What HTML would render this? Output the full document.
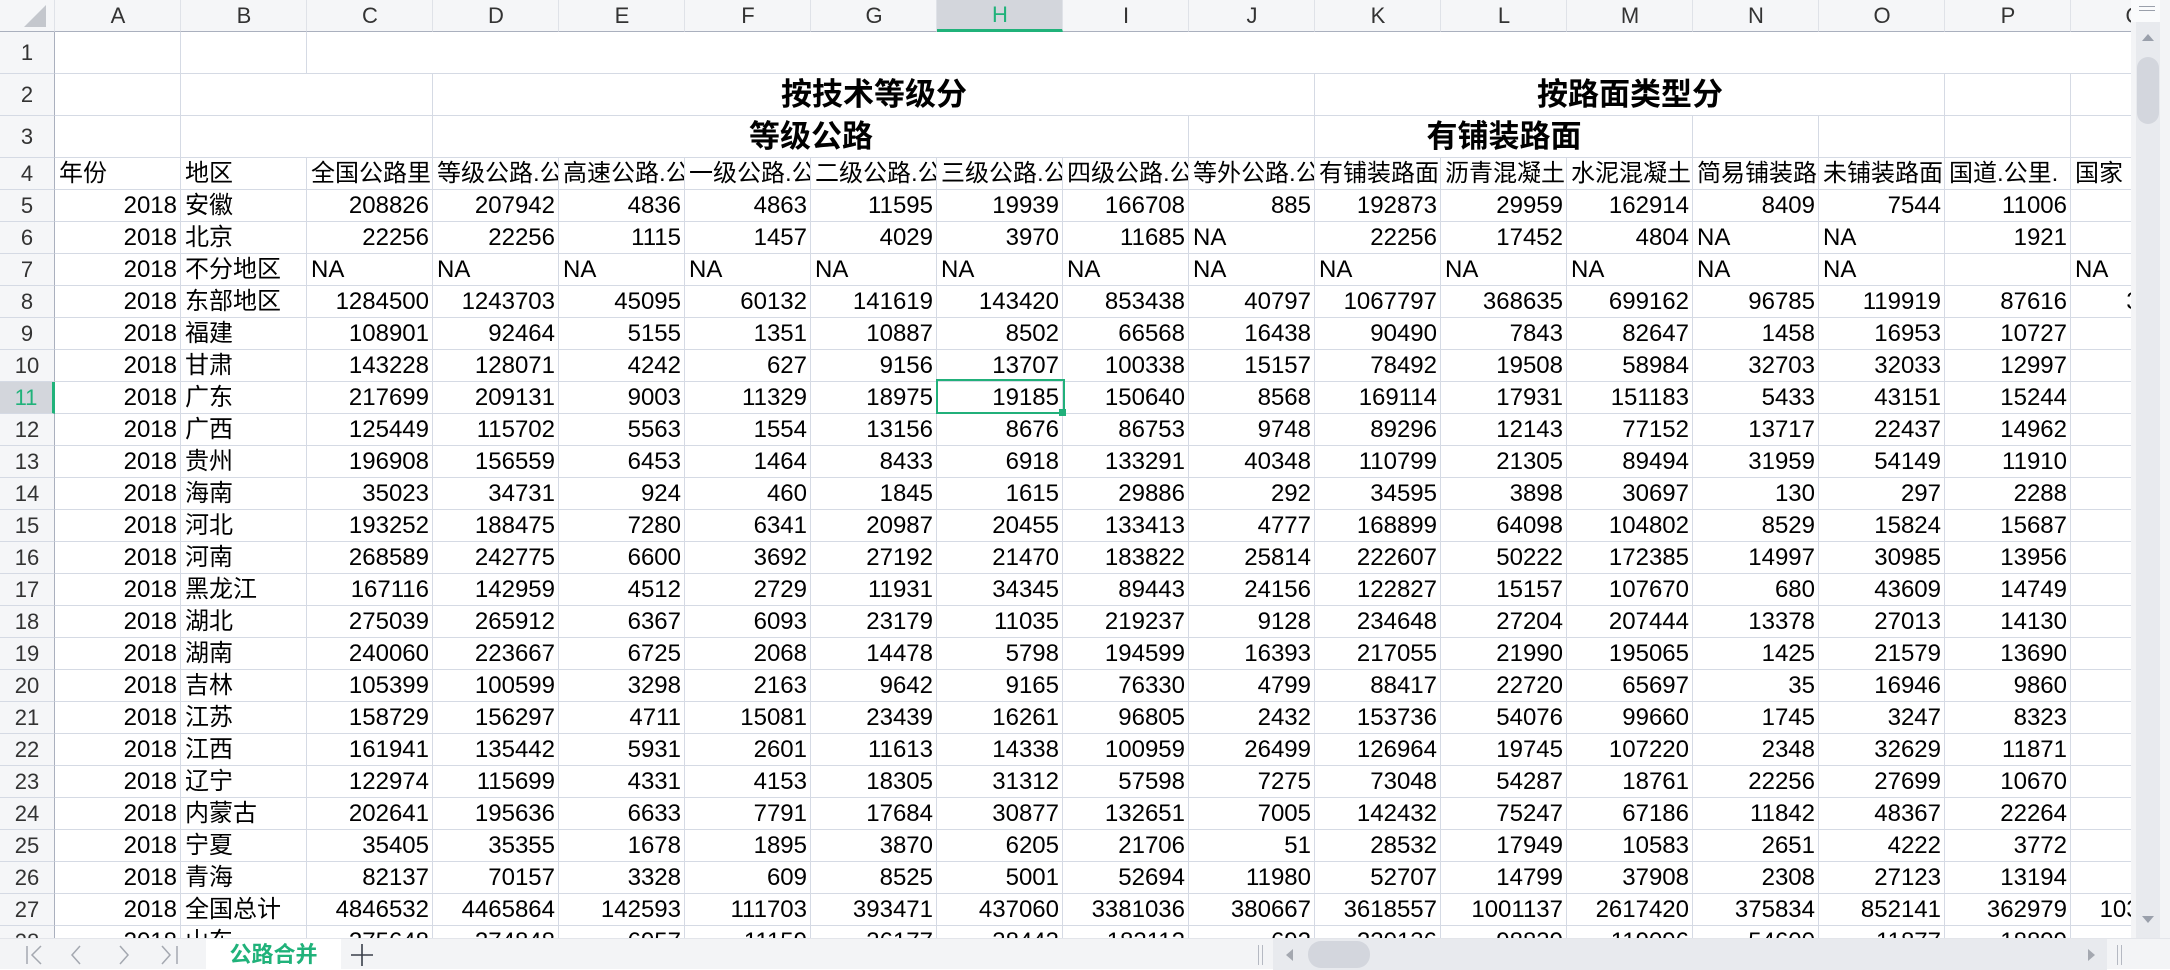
<!DOCTYPE html>
<html><head><meta charset="utf-8">
<style>
*{margin:0;padding:0;box-sizing:border-box}
body{width:2170px;height:969px;overflow:hidden;background:#fff;font-family:"Liberation Sans","Noto Sans CJK SC",sans-serif;position:relative}
#grid{position:absolute;left:0;top:0;width:2131px;height:938px;overflow:hidden}
table{border-collapse:separate;border-spacing:0;table-layout:fixed;width:2197px}
td{border-right:1px solid #d5dae4;border-bottom:1px solid #d5dae4;white-space:nowrap;overflow:hidden;font-size:24px;color:#000;padding:0 3px 0 4px;line-height:31px;height:32px;vertical-align:middle}
td.n{text-align:right}
tr.h td{height:30px;line-height:29px;background:#f5f6f8;text-align:center;color:#333;font-size:22px;border-bottom:1px solid #aab0be;border-right:1px solid #dfe2e8}
td.rh{background:#f5f6f8;text-align:center;color:#333;font-size:22px;border-right:1px solid #aab0be;padding:0}
tr.t td{height:42px;line-height:41px}
td.b{font-weight:bold;font-size:31px;text-align:center}
td.sel{background:#d3d6dc!important;color:#20b27a!important}
#selbox{position:absolute;left:936px;top:379px;width:129px;height:35px;border:2px solid #21b07a}
#selh{position:absolute;left:1059px;top:409px;width:7px;height:7px;background:#21b07a}
#bar{position:absolute;left:0;top:938px;width:2170px;height:31px;background:#f3f4f6;border-top:1px solid #e3e5ea}
#vs{position:absolute;left:2131px;top:0;width:39px;height:938px;background:#f3f4f6}
</style></head><body>
<div id="grid">
<table>
<colgroup><col style="width:55px"><col style="width:126px"><col style="width:126px"><col style="width:126px"><col style="width:126px"><col style="width:126px"><col style="width:126px"><col style="width:126px"><col style="width:126px"><col style="width:126px"><col style="width:126px"><col style="width:126px"><col style="width:126px"><col style="width:126px"><col style="width:126px"><col style="width:126px"><col style="width:126px"><col style="width:126px"></colgroup>
<tr class="h"><td style="position:relative"><svg width="24" height="24" style="position:absolute;left:22px;top:3px" viewBox="0 0 24 24"><polygon points="24,2 24,24 2,24" fill="#c4c7cd"/></svg></td><td>A</td><td>B</td><td>C</td><td>D</td><td>E</td><td>F</td><td>G</td><td class="sel" style="border-bottom:3px solid #20b27a">H</td><td>I</td><td>J</td><td>K</td><td>L</td><td>M</td><td>N</td><td>O</td><td>P</td><td>Q</td></tr>
<tr class="t"><td class="rh">1</td><td></td><td></td><td colspan="15"></td></tr>
<tr class="t"><td class="rh">2</td><td></td><td colspan="2"></td><td colspan="7" class="b">按技术等级分</td><td colspan="5" class="b">按路面类型分</td><td></td><td></td></tr>
<tr class="t"><td class="rh">3</td><td></td><td colspan="2"></td><td colspan="6" class="b">等级公路</td><td></td><td colspan="3" class="b">有铺装路面</td><td></td><td></td><td></td><td></td></tr>
<tr><td class="rh">4</td><td>年份</td><td>地区</td><td>全国公路里</td><td>等级公路.公</td><td>高速公路.公</td><td>一级公路.公</td><td>二级公路.公</td><td>三级公路.公</td><td>四级公路.公</td><td>等外公路.公</td><td>有铺装路面</td><td>沥青混凝土</td><td>水泥混凝土</td><td>简易铺装路</td><td>未铺装路面</td><td>国道.公里.</td><td>国家</td></tr>
<tr><td class="rh">5</td><td class="n">2018</td><td>安徽</td><td class="n">208826</td><td class="n">207942</td><td class="n">4836</td><td class="n">4863</td><td class="n">11595</td><td class="n">19939</td><td class="n">166708</td><td class="n">885</td><td class="n">192873</td><td class="n">29959</td><td class="n">162914</td><td class="n">8409</td><td class="n">7544</td><td class="n">11006</td><td></td></tr>
<tr><td class="rh">6</td><td class="n">2018</td><td>北京</td><td class="n">22256</td><td class="n">22256</td><td class="n">1115</td><td class="n">1457</td><td class="n">4029</td><td class="n">3970</td><td class="n">11685</td><td>NA</td><td class="n">22256</td><td class="n">17452</td><td class="n">4804</td><td>NA</td><td>NA</td><td class="n">1921</td><td></td></tr>
<tr><td class="rh">7</td><td class="n">2018</td><td>不分地区</td><td>NA</td><td>NA</td><td>NA</td><td>NA</td><td>NA</td><td>NA</td><td>NA</td><td>NA</td><td>NA</td><td>NA</td><td>NA</td><td>NA</td><td>NA</td><td></td><td>NA</td></tr>
<tr><td class="rh">8</td><td class="n">2018</td><td>东部地区</td><td class="n">1284500</td><td class="n">1243703</td><td class="n">45095</td><td class="n">60132</td><td class="n">141619</td><td class="n">143420</td><td class="n">853438</td><td class="n">40797</td><td class="n">1067797</td><td class="n">368635</td><td class="n">699162</td><td class="n">96785</td><td class="n">119919</td><td class="n">87616</td><td class="n">35321</td></tr>
<tr><td class="rh">9</td><td class="n">2018</td><td>福建</td><td class="n">108901</td><td class="n">92464</td><td class="n">5155</td><td class="n">1351</td><td class="n">10887</td><td class="n">8502</td><td class="n">66568</td><td class="n">16438</td><td class="n">90490</td><td class="n">7843</td><td class="n">82647</td><td class="n">1458</td><td class="n">16953</td><td class="n">10727</td><td></td></tr>
<tr><td class="rh">10</td><td class="n">2018</td><td>甘肃</td><td class="n">143228</td><td class="n">128071</td><td class="n">4242</td><td class="n">627</td><td class="n">9156</td><td class="n">13707</td><td class="n">100338</td><td class="n">15157</td><td class="n">78492</td><td class="n">19508</td><td class="n">58984</td><td class="n">32703</td><td class="n">32033</td><td class="n">12997</td><td></td></tr>
<tr><td class="rh sel" style="border-right:3px solid #20b27a">11</td><td class="n">2018</td><td>广东</td><td class="n">217699</td><td class="n">209131</td><td class="n">9003</td><td class="n">11329</td><td class="n">18975</td><td class="n">19185</td><td class="n">150640</td><td class="n">8568</td><td class="n">169114</td><td class="n">17931</td><td class="n">151183</td><td class="n">5433</td><td class="n">43151</td><td class="n">15244</td><td></td></tr>
<tr><td class="rh">12</td><td class="n">2018</td><td>广西</td><td class="n">125449</td><td class="n">115702</td><td class="n">5563</td><td class="n">1554</td><td class="n">13156</td><td class="n">8676</td><td class="n">86753</td><td class="n">9748</td><td class="n">89296</td><td class="n">12143</td><td class="n">77152</td><td class="n">13717</td><td class="n">22437</td><td class="n">14962</td><td></td></tr>
<tr><td class="rh">13</td><td class="n">2018</td><td>贵州</td><td class="n">196908</td><td class="n">156559</td><td class="n">6453</td><td class="n">1464</td><td class="n">8433</td><td class="n">6918</td><td class="n">133291</td><td class="n">40348</td><td class="n">110799</td><td class="n">21305</td><td class="n">89494</td><td class="n">31959</td><td class="n">54149</td><td class="n">11910</td><td></td></tr>
<tr><td class="rh">14</td><td class="n">2018</td><td>海南</td><td class="n">35023</td><td class="n">34731</td><td class="n">924</td><td class="n">460</td><td class="n">1845</td><td class="n">1615</td><td class="n">29886</td><td class="n">292</td><td class="n">34595</td><td class="n">3898</td><td class="n">30697</td><td class="n">130</td><td class="n">297</td><td class="n">2288</td><td></td></tr>
<tr><td class="rh">15</td><td class="n">2018</td><td>河北</td><td class="n">193252</td><td class="n">188475</td><td class="n">7280</td><td class="n">6341</td><td class="n">20987</td><td class="n">20455</td><td class="n">133413</td><td class="n">4777</td><td class="n">168899</td><td class="n">64098</td><td class="n">104802</td><td class="n">8529</td><td class="n">15824</td><td class="n">15687</td><td></td></tr>
<tr><td class="rh">16</td><td class="n">2018</td><td>河南</td><td class="n">268589</td><td class="n">242775</td><td class="n">6600</td><td class="n">3692</td><td class="n">27192</td><td class="n">21470</td><td class="n">183822</td><td class="n">25814</td><td class="n">222607</td><td class="n">50222</td><td class="n">172385</td><td class="n">14997</td><td class="n">30985</td><td class="n">13956</td><td></td></tr>
<tr><td class="rh">17</td><td class="n">2018</td><td>黑龙江</td><td class="n">167116</td><td class="n">142959</td><td class="n">4512</td><td class="n">2729</td><td class="n">11931</td><td class="n">34345</td><td class="n">89443</td><td class="n">24156</td><td class="n">122827</td><td class="n">15157</td><td class="n">107670</td><td class="n">680</td><td class="n">43609</td><td class="n">14749</td><td></td></tr>
<tr><td class="rh">18</td><td class="n">2018</td><td>湖北</td><td class="n">275039</td><td class="n">265912</td><td class="n">6367</td><td class="n">6093</td><td class="n">23179</td><td class="n">11035</td><td class="n">219237</td><td class="n">9128</td><td class="n">234648</td><td class="n">27204</td><td class="n">207444</td><td class="n">13378</td><td class="n">27013</td><td class="n">14130</td><td></td></tr>
<tr><td class="rh">19</td><td class="n">2018</td><td>湖南</td><td class="n">240060</td><td class="n">223667</td><td class="n">6725</td><td class="n">2068</td><td class="n">14478</td><td class="n">5798</td><td class="n">194599</td><td class="n">16393</td><td class="n">217055</td><td class="n">21990</td><td class="n">195065</td><td class="n">1425</td><td class="n">21579</td><td class="n">13690</td><td></td></tr>
<tr><td class="rh">20</td><td class="n">2018</td><td>吉林</td><td class="n">105399</td><td class="n">100599</td><td class="n">3298</td><td class="n">2163</td><td class="n">9642</td><td class="n">9165</td><td class="n">76330</td><td class="n">4799</td><td class="n">88417</td><td class="n">22720</td><td class="n">65697</td><td class="n">35</td><td class="n">16946</td><td class="n">9860</td><td></td></tr>
<tr><td class="rh">21</td><td class="n">2018</td><td>江苏</td><td class="n">158729</td><td class="n">156297</td><td class="n">4711</td><td class="n">15081</td><td class="n">23439</td><td class="n">16261</td><td class="n">96805</td><td class="n">2432</td><td class="n">153736</td><td class="n">54076</td><td class="n">99660</td><td class="n">1745</td><td class="n">3247</td><td class="n">8323</td><td></td></tr>
<tr><td class="rh">22</td><td class="n">2018</td><td>江西</td><td class="n">161941</td><td class="n">135442</td><td class="n">5931</td><td class="n">2601</td><td class="n">11613</td><td class="n">14338</td><td class="n">100959</td><td class="n">26499</td><td class="n">126964</td><td class="n">19745</td><td class="n">107220</td><td class="n">2348</td><td class="n">32629</td><td class="n">11871</td><td></td></tr>
<tr><td class="rh">23</td><td class="n">2018</td><td>辽宁</td><td class="n">122974</td><td class="n">115699</td><td class="n">4331</td><td class="n">4153</td><td class="n">18305</td><td class="n">31312</td><td class="n">57598</td><td class="n">7275</td><td class="n">73048</td><td class="n">54287</td><td class="n">18761</td><td class="n">22256</td><td class="n">27699</td><td class="n">10670</td><td></td></tr>
<tr><td class="rh">24</td><td class="n">2018</td><td>内蒙古</td><td class="n">202641</td><td class="n">195636</td><td class="n">6633</td><td class="n">7791</td><td class="n">17684</td><td class="n">30877</td><td class="n">132651</td><td class="n">7005</td><td class="n">142432</td><td class="n">75247</td><td class="n">67186</td><td class="n">11842</td><td class="n">48367</td><td class="n">22264</td><td></td></tr>
<tr><td class="rh">25</td><td class="n">2018</td><td>宁夏</td><td class="n">35405</td><td class="n">35355</td><td class="n">1678</td><td class="n">1895</td><td class="n">3870</td><td class="n">6205</td><td class="n">21706</td><td class="n">51</td><td class="n">28532</td><td class="n">17949</td><td class="n">10583</td><td class="n">2651</td><td class="n">4222</td><td class="n">3772</td><td></td></tr>
<tr><td class="rh">26</td><td class="n">2018</td><td>青海</td><td class="n">82137</td><td class="n">70157</td><td class="n">3328</td><td class="n">609</td><td class="n">8525</td><td class="n">5001</td><td class="n">52694</td><td class="n">11980</td><td class="n">52707</td><td class="n">14799</td><td class="n">37908</td><td class="n">2308</td><td class="n">27123</td><td class="n">13194</td><td></td></tr>
<tr><td class="rh">27</td><td class="n">2018</td><td>全国总计</td><td class="n">4846532</td><td class="n">4465864</td><td class="n">142593</td><td class="n">111703</td><td class="n">393471</td><td class="n">437060</td><td class="n">3381036</td><td class="n">380667</td><td class="n">3618557</td><td class="n">1001137</td><td class="n">2617420</td><td class="n">375834</td><td class="n">852141</td><td class="n">362979</td><td class="n">1034568</td></tr>
<tr><td class="rh">28</td><td class="n">2018</td><td>山东</td><td class="n">275648</td><td class="n">274848</td><td class="n">6957</td><td class="n">11159</td><td class="n">36177</td><td class="n">38443</td><td class="n">182112</td><td class="n">692</td><td class="n">220136</td><td class="n">98839</td><td class="n">119096</td><td class="n">54600</td><td class="n">11877</td><td class="n">18899</td><td></td></tr>
</table>
<div id="selbox"></div><div id="selh"></div>
</div>
<div id="vs">
<div style="position:absolute;left:0;top:0;width:29px;height:22px;background:#fafbfc"></div>
<div style="position:absolute;left:8px;top:6px;width:16px;height:1px;background:#9aa0ab"></div>
<div style="position:absolute;left:8px;top:10px;width:16px;height:1px;background:#9aa0ab"></div>
<div style="position:absolute;left:5px;top:22px;width:24px;height:916px;background:#e8eaee"></div>
<svg style="position:absolute;left:11px;top:34px" width="12" height="8"><polygon points="6,0 12,7 0,7" fill="#9aa0ab"/></svg>
<div style="position:absolute;left:6px;top:57px;width:22px;height:67px;border-radius:11px;background:#d3d6dd"></div>
<svg style="position:absolute;left:11px;top:916px" width="12" height="8"><polygon points="0,0 12,0 6,7" fill="#9aa0ab"/></svg>
</div>
<div id="bar">
<svg style="position:absolute;left:20px;top:4px" width="170" height="24" viewBox="0 0 170 24" fill="none" stroke="#a4a8b0" stroke-width="1.5">
<path d="M7 3V21M21 3L12 12L21 21"/><path d="M60 3L52 12L60 21"/><path d="M100 3L108 12L100 21"/><path d="M142 3L150 12L142 21M157 3V21"/>
</svg>
<div style="position:absolute;left:206px;top:0;width:135px;height:31px;background:#fff;color:#20b27a;font-weight:bold;font-size:22px;text-align:center;line-height:31px">公路合并</div>
<svg style="position:absolute;left:350px;top:4px" width="24" height="24"><path d="M12 1V23M1 12H23" stroke="#3a3f4a" stroke-width="1.6"/></svg>
<div style="position:absolute;left:1258px;top:6px;width:1px;height:20px;background:#b5b9c2"></div>
<div style="position:absolute;left:1262px;top:6px;width:1px;height:20px;background:#b5b9c2"></div>
<div style="position:absolute;left:1273px;top:0;width:834px;height:31px;background:#e8eaee"></div>
<svg style="position:absolute;left:1286px;top:10px" width="7" height="12"><polygon points="7,0 7,12 0,6" fill="#a4a8b0"/></svg>
<div style="position:absolute;left:1308px;top:2px;width:62px;height:27px;border-radius:13px;background:#d3d6dd"></div>
<svg style="position:absolute;left:2088px;top:10px" width="7" height="12"><polygon points="0,0 0,12 7,6" fill="#a4a8b0"/></svg>
<div style="position:absolute;left:2117px;top:6px;width:1px;height:20px;background:#b5b9c2"></div>
<div style="position:absolute;left:2121px;top:6px;width:1px;height:20px;background:#b5b9c2"></div>
</div>
</body></html>
